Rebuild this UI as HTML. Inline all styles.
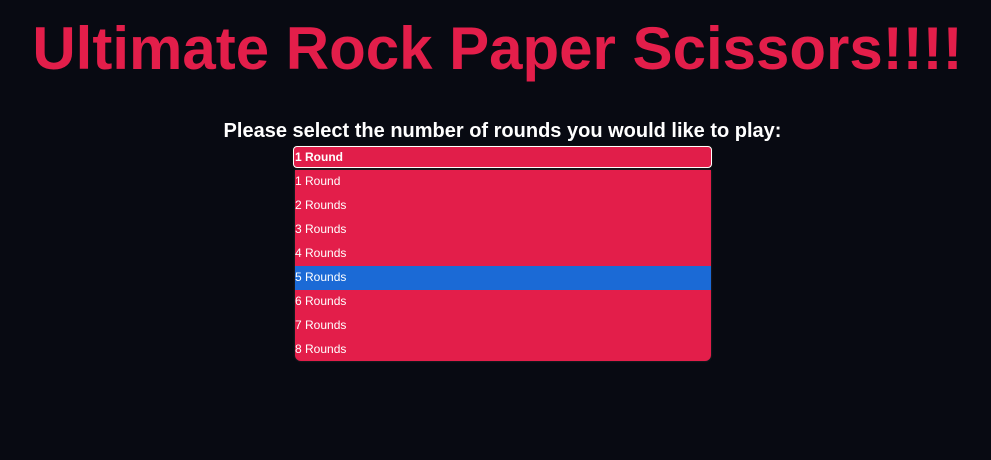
<!DOCTYPE html>
<html><head><style>
body{margin:0;width:991px;height:460px;background:#080a12;font-family:"Liberation Sans",sans-serif;position:relative;overflow:hidden}
h1{position:absolute;top:15px;left:2px;width:991px;margin:0;text-align:center;color:#e31e4a;font-size:60px;font-weight:bold;line-height:68px}
.sub{position:absolute;top:119px;left:7px;width:991px;text-align:center;color:#fff;font-size:20px;font-weight:bold;line-height:24px}
.sel{position:absolute;left:293px;top:146px;width:416px;height:20px;border:1px solid #fff;border-radius:4px;background:#e11e4a;color:#fff;font-size:12px;font-weight:bold;line-height:20px;padding-left:1px;box-shadow:0 0 0 1px #111}
.dd{position:absolute;left:295px;top:170px;width:416px;height:191px;background:#e31e4a;border-radius:0 0 6px 6px;box-shadow:0 0 2px #333}
.o{height:24px;line-height:22px;color:#fff;font-size:12px;padding-left:0}
.h{background:#1b6ad6}
</style></head><body>
<h1>Ultimate Rock Paper Scissors!!!!</h1>
<div class="sub">Please select the number of rounds you would like to play:</div>
<div class="sel">1 Round</div>
<div class="dd">
<div class="o">1 Round</div><div class="o">2 Rounds</div><div class="o">3 Rounds</div><div class="o">4 Rounds</div><div class="o h">5 Rounds</div><div class="o">6 Rounds</div><div class="o">7 Rounds</div><div class="o">8 Rounds</div>
</div>
</body></html>
